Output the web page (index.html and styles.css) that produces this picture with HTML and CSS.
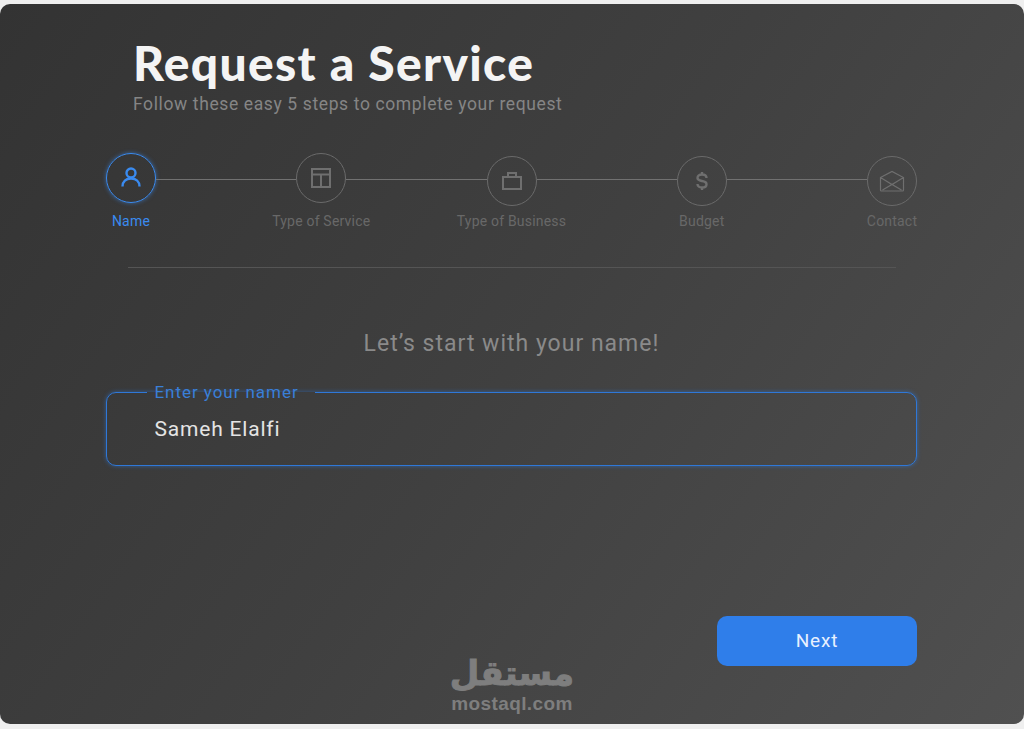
FILE: index.html
```html
<!DOCTYPE html>
<html lang="en">
<head>
  <meta charset="UTF-8" />
  <title>Request a Service</title>
  <link rel="stylesheet" href="styles.css">
</head>
<body>

  <div class="card">
    <div class="head">
      <h1>Request a Service</h1>
      <p>Follow these easy 5 steps to complete your request</p>
    </div>

    <div class="steps">
      <div class="step active">
        <div class="circle">
          <svg width="24" height="24" viewBox="0 0 24 24"><circle cx="12" cy="7" r="4.500"/><path d="M3.500 20.500c0-5 3.500-8 8.500-8s8.500 3 8.500 8"/></svg>
        </div>
        <span>Name</span>
      </div>
      <div class="line"></div>
      <div class="step">
        <div class="circle">
          <svg width="24" height="24" viewBox="0 0 24 24"><path d="M3 3h18v18H3zM3 8.500h18M12 8.500V21"/></svg>
        </div>
        <span>Type of Service</span>
      </div>
      <div class="line"></div>
      <div class="step low">
        <div class="circle">
          <svg width="24" height="24" viewBox="0 0 24 24"><path d="M3 8h18v12H3zM8 8V4h8v4"/></svg>
        </div>
        <span>Type of Business</span>
      </div>
      <div class="line"></div>
      <div class="step low">
        <div class="circle">
          <svg width="24" height="24" viewBox="0 0 24 24"><path class="thick" d="M16.500 9c0-2.200-1.800-3.500-4.500-3.500S7.500 6.800 7.500 9s1.800 2.500 4.500 3 4.500 1 4.500 3.200-1.800 3.300-4.500 3.300-4.500-1.200-4.500-3.500M12 3v2.500M12 18.500V21"/></svg>
        </div>
        <span>Budget</span>
      </div>
      <div class="line"></div>
      <div class="step low">
        <div class="circle">
          <svg width="26" height="26" viewBox="0 0 26 26"><path class="thin" d="M1.500 9.500 13 3.500l11.500 6V22a1 1 0 0 1-1 1h-21a1 1 0 0 1-1-1zM1.500 9.500 13 16.500l11.500-7M3.500 22 13 16.500 22.500 22"/></svg>
        </div>
        <span>Contact</span>
      </div>
    </div>

    <hr class="divider" />

    <h2>Let’s start with your name!</h2>

    <fieldset class="field">
      <legend>Enter your namer</legend>
      <input type="text" value="Sameh Elalfi" />
    </fieldset>

    <div class="actions">
      <button type="button">Next</button>
    </div>

    <div class="watermark">
      <div class="logo-ar" lang="ar" dir="rtl">مستقل</div>
      <div class="logo-en">mostaql.com</div>
    </div>
  </div>

</body>
</html>
```

FILE: styles.css
```css
* {
  box-sizing: border-box;
}

body {
  margin: 0;
  padding-top: 4px;
  height: 729px;
  overflow: hidden;
  background: #efefef;
  font-family: Roboto, "Liberation Sans", sans-serif;
}

.card {
  position: relative;
  height: 720px;
  padding: 0 107px 0 106px;
  border-radius: 10px;
  background: linear-gradient(125deg, #333333 0%, #404040 50%, #505050 100%);
}

.head {
  padding: 30px 0 0 27px;
}

h1 {
  margin: 0;
  font-family: Lato, sans-serif;
  font-size: 48px;
  font-weight: 900;
  line-height: 58px;
  letter-spacing: 1.3px;
  color: #f4f4f4;
}

.head p {
  margin: 2px 0 0;
  font-size: 17.5px;
  line-height: 20px;
  letter-spacing: 0.62px;
  color: #858585;
}

.steps {
  display: flex;
  margin-top: 39px;
}

.step {
  display: flex;
  flex-direction: column;
  align-items: center;
  width: 50px;
}

.step span {
  margin-top: 6px;
  font-size: 14px;
  line-height: 18px;
  letter-spacing: 0.2px;
  white-space: nowrap;
  color: #686868;
}

.circle {
  display: flex;
  align-items: center;
  justify-content: center;
  width: 50px;
  height: 50px;
  margin-bottom: 3px;
  border: 1px solid #6a6a6a;
  border-radius: 50%;
}

.step.low .circle {
  margin: 3px 0 0;
}

.circle svg {
  fill: none;
  stroke: #6f6f6f;
  stroke-width: 2;
}

.circle svg .thick {
  stroke-width: 2.4;
}

.circle svg .thin {
  stroke-width: 1.2;
}

.step.active .circle {
  border: 1.5px solid #3a8bf0;
  box-shadow: 0 0 4px rgba(58, 139, 240, 0.6);
}

.step.active svg {
  stroke: #3a8bf0;
  stroke-width: 2.4;
}

.step.active span {
  color: #3a8bf0;
}

.line {
  flex: 1;
  height: 1px;
  margin-top: 26px;
  background: #717171;
}

.divider {
  height: 1px;
  margin: 37px 21px 0 22px;
  border: 0;
  background: #555555;
}

h2 {
  margin: 61px 0 0;
  font-size: 23px;
  font-weight: 400;
  line-height: 30px;
  letter-spacing: 1px;
  text-align: center;
  color: #8a8a8a;
}

.field {
  height: 85px;
  margin: 22px 0 0;
  padding: 0 0 0 47.5px;
  border: 1.5px solid #2f78d8;
  border-radius: 10px;
  box-shadow: 0 0 4px rgba(47, 120, 216, 0.6);
}

.field legend {
  margin-left: -8px;
  padding: 0 16px 0 8px;
  font-size: 17px;
  line-height: 22px;
  letter-spacing: 0.95px;
  color: #3a7fd8;
}

.field input {
  display: block;
  width: 100%;
  margin-top: 12px;
  padding: 0;
  border: none;
  outline: none;
  background: transparent;
  font-family: inherit;
  font-size: 21px;
  line-height: 28px;
  letter-spacing: 0.8px;
  color: #e4e4e4;
}

.actions {
  display: flex;
  justify-content: flex-end;
  margin-top: 150px;
}

button {
  width: 200px;
  height: 50px;
  padding: 0 0 2px;
  border: none;
  border-radius: 10px;
  background-color: #2f7eea;
  font-family: inherit;
  font-size: 19px;
  letter-spacing: 0.8px;
  color: #e8f1ff;
}

.watermark {
  position: absolute;
  left: 412px;
  bottom: 10px;
  width: 200px;
  text-align: center;
  color: #7e7e7e;
}

.logo-ar {
  margin-bottom: 3px;
  font-family: "DejaVu Sans", sans-serif;
  font-size: 34px;
  font-weight: 700;
  line-height: 36px;
  -webkit-text-stroke: 1px #7e7e7e;
}

.logo-en {
  font-family: "Liberation Sans", sans-serif;
  font-size: 19px;
  font-weight: 700;
  line-height: 20px;
  letter-spacing: 0.4px;
}
```
